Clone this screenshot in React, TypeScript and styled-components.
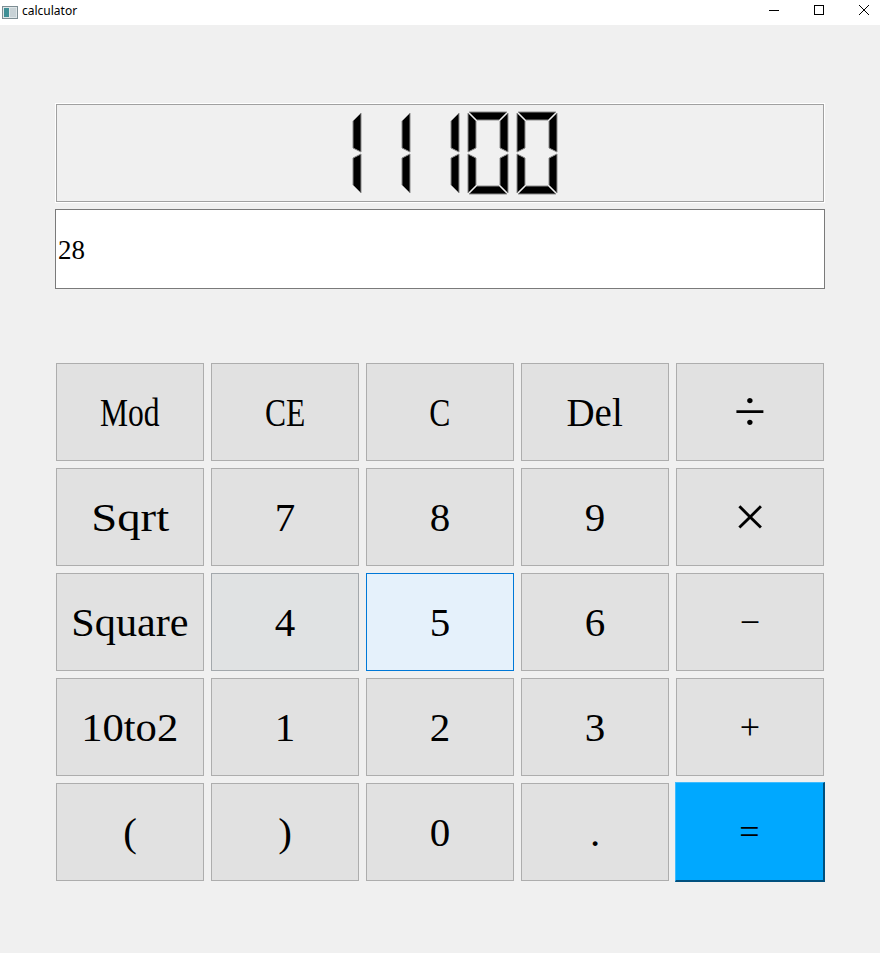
import styled, { createGlobalStyle } from "styled-components";

const GlobalStyle = createGlobalStyle`
  body {
    margin: 0;
    background: #f0f0f0;
    font-family: "Liberation Serif", serif;
  }
`;

const Window = styled.div`
  width: 880px;
  height: 953px;
  display: flex;
  flex-direction: column;
  background: #f0f0f0;
  overflow: hidden;
`;

const TitleBar = styled.div`
  height: 25px;
  background: #ffffff;
  display: flex;
  flex-direction: row;
  align-items: center;
  padding-left: 2px;
`;

const TitleText = styled.span`
  font-family: "Segoe UI", "Noto Sans", "Liberation Sans", sans-serif;
  font-size: 12px;
  color: #000;
  margin-left: 4px;
  margin-top: -4px;
`;

const Controls = styled.div`
  margin-left: auto;
  display: flex;
  flex-direction: row;
  align-items: center;
  gap: 35px;
  padding-right: 11px;
  margin-top: -5px;
`;

const Content = styled.div`
  display: flex;
  flex-direction: column;
  padding: 78px 55px 0 55px;
`;

const Lcd = styled.div`
  height: 100px;
  box-sizing: border-box;
  border: 1px solid #ffffff;
  box-shadow: inset 0 0 0 1px #a0a0a0;
  display: flex;
  align-items: center;
  justify-content: center;
`;

const LineEdit = styled.div`
  margin-top: 6px;
  height: 80px;
  box-sizing: border-box;
  border: 1px solid #7a7a7a;
  background: #ffffff;
  display: flex;
  align-items: center;
  padding: 2px 0 0 2px;
  font-size: 27px;
  color: #000;
`;

const Keypad = styled.div`
  margin-top: 74px;
  padding: 0 1px;
  display: grid;
  grid-template-columns: repeat(5, 148px);
  grid-auto-rows: 98px;
  gap: 7px;
`;

type Tone = "normal" | "hover" | "fading" | "primary";

const toneStyles: Record<Tone, string> = {
  normal: "background: #e1e1e1; border: 1px solid #adadad;",
  hover: "background: #e5f1fb; border: 1px solid #0078d7;",
  fading: "background: #e0e2e3; border: 1px solid #a3a8ac;",
  primary:
    "background: #00a8ff; border-style: solid; border-width: 1px 2px 2px 1px; border-color: #3ebcff #00507e #00507e #3ebcff; margin: -1px;",
};

const Key = styled.div<{ $tone: Tone }>`
  box-sizing: border-box;
  display: flex;
  align-items: center;
  justify-content: center;
  font-family: "Liberation Serif", serif;
  color: #000;
  ${(p) => toneStyles[p.$tone]}
`;

const Label = styled.span<{ $sx: number; $size: number }>`
  display: inline-block;
  font-size: ${(p) => p.$size}px;
  line-height: 1;
  transform: scaleX(${(p) => p.$sx});
`;

type KeyDef = { label: string; sx?: number; size?: number; tone?: Tone };

const keys: KeyDef[] = [
  { label: "Mod", sx: 0.77 },
  { label: "CE", sx: 0.77 },
  { label: "C", sx: 0.77 },
  { label: "Del", sx: 0.95 },
  { label: "÷", size: 58 },
  { label: "Sqrt", sx: 1.14 },
  { label: "7" },
  { label: "8" },
  { label: "9" },
  { label: "×", size: 58 },
  { label: "Square", sx: 1.03 },
  { label: "4", tone: "fading" },
  { label: "5", tone: "hover" },
  { label: "6" },
  { label: "−", size: 36 },
  { label: "10to2", sx: 1.04 },
  { label: "1" },
  { label: "2" },
  { label: "3" },
  { label: "+", size: 36 },
  { label: "(" },
  { label: ")" },
  { label: "0" },
  { label: "." },
  { label: "=", size: 36, tone: "primary" },
];

// seven segment drawing, digit cell 40 x 82, segment 8 thick
const W = 40;
const H = 82;
const T = 8;
const G = 1;

function segments(x: number, y: number): Record<string, number[][]> {
  const mid = y + H / 2;
  return {
    top: [[x + G, y], [x + W - G, y], [x + W - T - G, y + T], [x + T + G, y + T]],
    bottom: [[x + G, y + H], [x + W - G, y + H], [x + W - T - G, y + H - T], [x + T + G, y + H - T]],
    ul: [[x, y + G], [x + T, y + T + G], [x + T, mid - T / 2 - G], [x, mid - G]],
    ll: [[x, mid + G], [x + T, mid + T / 2 + G], [x + T, y + H - T - G], [x, y + H - G]],
    ur: [[x + W, y + G], [x + W, mid - G], [x + W - T, mid - T / 2 - G], [x + W - T, y + T + G]],
    lr: [[x + W, mid + G], [x + W, y + H - G], [x + W - T, y + H - T - G], [x + W - T, mid + T / 2 + G]],
    mid: [
      [x + G, mid], [x + T + G, mid - T / 2], [x + W - T - G, mid - T / 2],
      [x + W - G, mid], [x + W - T - G, mid + T / 2], [x + T + G, mid + T / 2],
    ],
  };
}

const digitSegments: Record<string, string[]> = {
  "0": ["top", "ul", "ur", "ll", "lr", "bottom"],
  "1": ["ur", "lr"],
};

function LcdNumber({ value }: { value: string }) {
  const chars = value.split("");
  return (
    <svg width={240} height={84} viewBox="0 0 240 84">
      {chars.map((c, i) => {
        const segs = segments(1 + i * 49, 1);
        return (digitSegments[c] || []).map((name) => (
          <polygon
            key={`${i}-${name}`}
            points={segs[name].map((p) => p.join(",")).join(" ")}
            fill="#000"
            stroke="#8c8c8c"
            strokeWidth={1}
          />
        ));
      })}
    </svg>
  );
}

function AppIcon() {
  return (
    <svg width={16} height={13} viewBox="0 0 16 13">
      <rect x={0.5} y={0.5} width={15} height={12} fill="#dfe6e8" stroke="#7d8d93" />
      <rect x={2} y={2} width={5} height={9} fill="#3f8f96" />
      <rect x={8} y={2} width={6} height={9} fill="#c8d2d6" />
    </svg>
  );
}

export default function App() {
  return (
    <Window>
      <GlobalStyle />
      <TitleBar>
        <AppIcon />
        <TitleText>calculator</TitleText>
        <Controls>
          <svg width={10} height={10} viewBox="0 0 10 10">
            <line x1={0} y1={5.5} x2={10} y2={5.5} stroke="#000" strokeWidth={1} />
          </svg>
          <svg width={10} height={10} viewBox="0 0 10 10">
            <rect x={0.5} y={0.5} width={9} height={9} fill="none" stroke="#000" strokeWidth={1} />
          </svg>
          <svg width={10} height={10} viewBox="0 0 10 10">
            <path d="M0 0 L10 10 M10 0 L0 10" stroke="#000" strokeWidth={1} />
          </svg>
        </Controls>
      </TitleBar>
      <Content>
        <Lcd>
          <LcdNumber value="11100" />
        </Lcd>
        <LineEdit>28</LineEdit>
        <Keypad>
          {keys.map((k) => (
            <Key key={k.label} $tone={k.tone || "normal"}>
              <Label $sx={k.sx || 1} $size={k.size || 41}>
                {k.label}
              </Label>
            </Key>
          ))}
        </Keypad>
      </Content>
    </Window>
  );
}
